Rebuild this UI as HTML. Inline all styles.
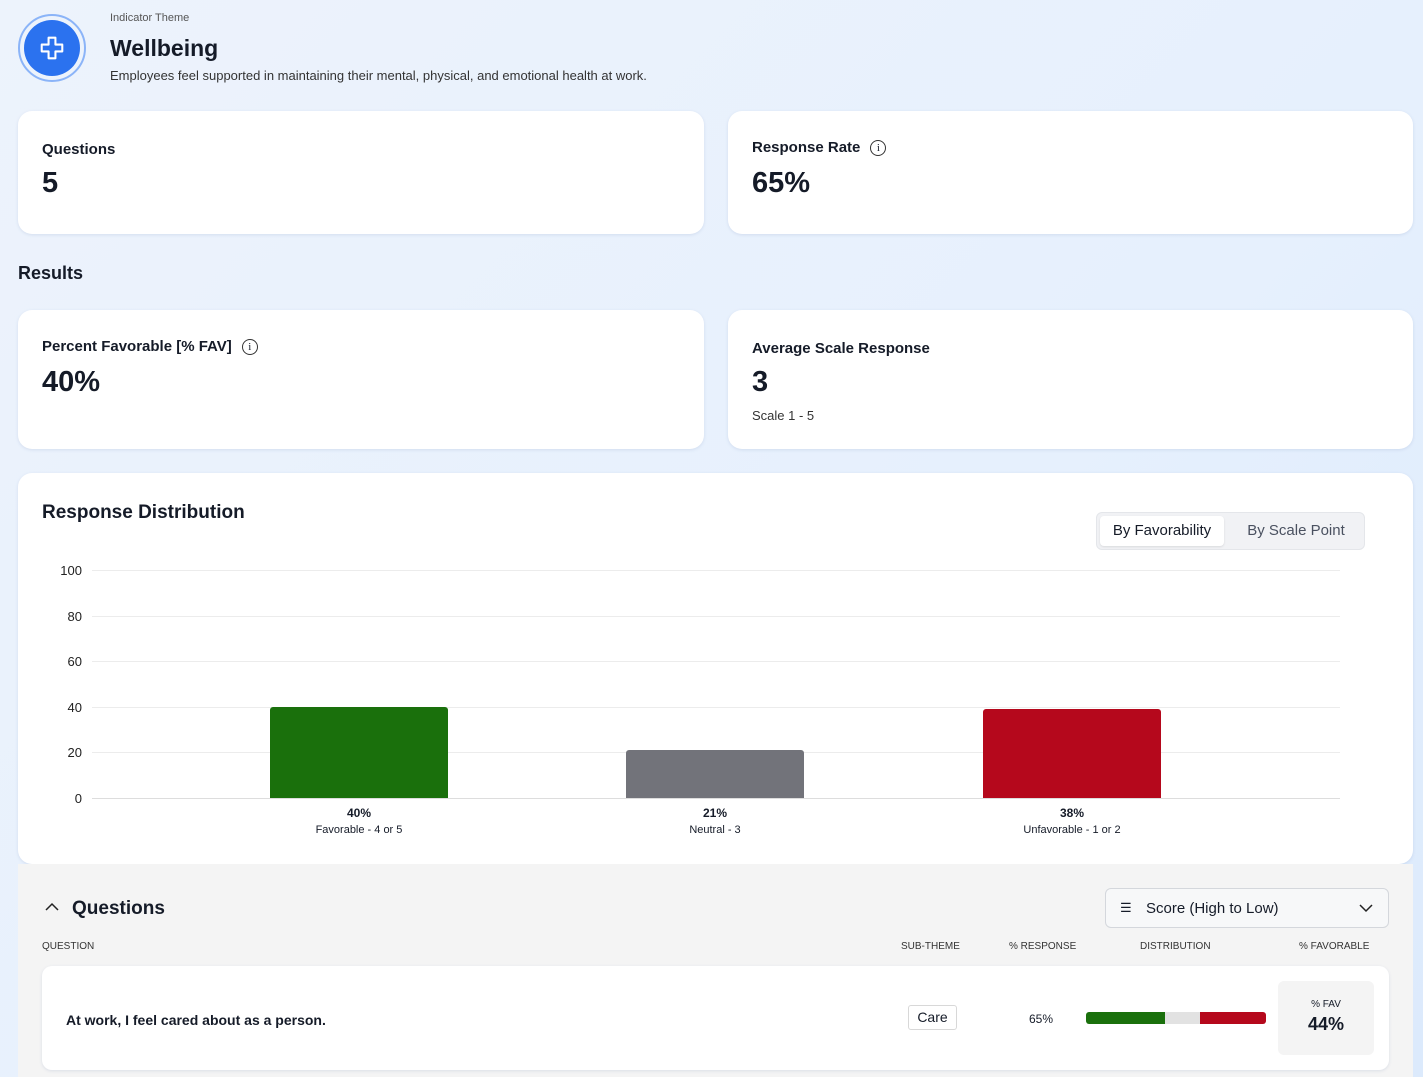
<!DOCTYPE html>
<html><head><style>
*{box-sizing:border-box;margin:0;padding:0}
body{width:1423px;height:1077px;overflow:hidden;font-family:"Liberation Sans",sans-serif;color:#151b28;background:linear-gradient(135deg,#edf3fc 0%,#e6f0fd 60%,#dceafc 100%);position:relative}
.a{position:absolute}
.card{position:absolute;background:#fff;border-radius:14px;box-shadow:0 1px 3px rgba(80,110,160,.15)}
.lbl{font-size:15px;font-weight:bold;position:absolute;left:24px}
.big{font-size:29px;font-weight:bold;position:absolute;left:24px}
.info{display:inline-block;width:16px;height:16px;border:1.3px solid #333;border-radius:50%;font-size:11px;text-align:center;line-height:14px;font-weight:normal;margin-left:10px;vertical-align:1px;font-family:"Liberation Serif",serif}
.yl{position:absolute;width:40px;text-align:right;left:42px;font-size:13px;color:#222}
.gl{position:absolute;left:92px;width:1248px;height:1px;background:#ececec}
.bl{position:absolute;text-align:center;width:200px;font-size:11px;line-height:16px}
.th{position:absolute;top:941px;font-size:10px;color:#333}
</style></head><body>
<div class="a" style="left:18px;top:14px;width:68px;height:68px;border-radius:50%;border:2px solid #8bb4f8;"></div>
<div class="a" style="left:24px;top:20px;width:56px;height:56px;border-radius:50%;background:#2b72ef;"></div>
<svg class="a" style="left:40px;top:36px" width="24" height="24" viewBox="0 0 28 28"><path d="M10 2h8v8h8v8h-8v8h-8v-8H2v-8h8z" fill="none" stroke="#fff" stroke-width="2.4" stroke-linejoin="round"/></svg>
<div class="a" style="left:110px;top:12px;font-size:11px;color:#555">Indicator Theme</div>
<div class="a" style="left:110px;top:35px;font-size:23px;font-weight:bold">Wellbeing</div>
<div class="a" style="left:110px;top:68px;font-size:13px;color:#333">Employees feel supported in maintaining their mental, physical, and emotional health at work.</div>

<div class="card" style="left:18px;top:111px;width:686px;height:123px"><div class="lbl" style="top:30px">Questions</div><div class="big" style="top:56px">5</div></div>
<div class="card" style="left:728px;top:111px;width:685px;height:123px"><div class="lbl" style="top:28px">Response Rate<span class="info">i</span></div><div class="big" style="top:56px">65%</div></div>
<div class="a" style="left:18px;top:263px;font-size:18px;font-weight:bold">Results</div>
<div class="card" style="left:18px;top:310px;width:686px;height:139px"><div class="lbl" style="top:28px">Percent Favorable [% FAV]<span class="info">i</span></div><div class="big" style="top:56px">40%</div></div>
<div class="card" style="left:728px;top:310px;width:685px;height:139px"><div class="lbl" style="top:30px">Average Scale Response</div><div class="big" style="top:56px">3</div><div class="a" style="left:24px;top:98px;font-size:13px;color:#333">Scale 1 - 5</div></div>

<div class="card" style="left:18px;top:473px;width:1395px;height:391px">
<div class="a" style="left:24px;top:29px;font-size:19px;font-weight:bold">Response Distribution</div>
<div class="a" style="left:1078px;top:39px;width:269px;height:38px;background:#f1f2f5;border-radius:6px;border:1px solid #e4e6ea"></div>
<div class="a" style="left:1082px;top:43px;width:124px;height:30px;background:#fff;border-radius:4px;box-shadow:0 1px 2px rgba(0,0,0,.1);font-size:15px;text-align:center;line-height:30px">By Favorability</div>
<div class="a" style="left:1218px;top:43px;width:120px;font-size:15px;line-height:30px;color:#4a5160;text-align:center">By Scale Point</div>
</div>
<div class="gl" style="top:570px"></div><div class="gl" style="top:616px"></div><div class="gl" style="top:661px"></div><div class="gl" style="top:707px"></div><div class="gl" style="top:752px"></div><div class="gl" style="top:798px;background:#ddd"></div>
<div class="yl" style="top:563px">100</div><div class="yl" style="top:609px">80</div><div class="yl" style="top:654px">60</div><div class="yl" style="top:700px">40</div><div class="yl" style="top:745px">20</div><div class="yl" style="top:791px">0</div>
<div class="a" style="left:270px;top:707px;width:178px;height:91px;background:#1a700c;border-radius:3px 3px 0 0"></div>
<div class="a" style="left:626px;top:750px;width:178px;height:48px;background:#72737a;border-radius:3px 3px 0 0"></div>
<div class="a" style="left:983px;top:709px;width:178px;height:89px;background:#b5081c;border-radius:3px 3px 0 0"></div>
<div class="bl" style="left:259px;top:805px"><b style="font-size:12px">40%</b><br>Favorable - 4 or 5</div>
<div class="bl" style="left:615px;top:805px"><b style="font-size:12px">21%</b><br>Neutral - 3</div>
<div class="bl" style="left:972px;top:805px"><b style="font-size:12px">38%</b><br>Unfavorable - 1 or 2</div>

<div class="a" style="left:18px;top:864px;width:1395px;height:213px;background:#f4f4f4"></div>
<svg class="a" style="left:44px;top:902px" width="16" height="10"><path d="M2 8l6-6 6 6" fill="none" stroke="#222" stroke-width="1.5"/></svg>
<div class="a" style="left:72px;top:898px;font-size:19px;font-weight:bold">Questions</div>
<div class="a" style="left:1105px;top:888px;width:284px;height:40px;background:#f7f8f9;border:1px solid #d4d7dc;border-radius:6px"></div>
<div class="a" style="left:1120px;top:900px;font-size:13px">☰</div>
<div class="a" style="left:1146px;top:900px;font-size:15px">Score (High to Low)</div>
<svg class="a" style="left:1358px;top:903px" width="16" height="10"><path d="M2 2l6 6 6-6" fill="none" stroke="#222" stroke-width="1.5"/></svg>
<div class="th" style="left:42px">QUESTION</div><div class="th" style="left:901px">SUB-THEME</div><div class="th" style="left:1009px">% RESPONSE</div><div class="th" style="left:1140px">DISTRIBUTION</div><div class="th" style="left:1299px">% FAVORABLE</div>
<div class="card" style="left:42px;top:966px;width:1347px;height:104px;border-radius:10px"></div>
<div class="a" style="left:66px;top:1012px;font-size:14px;font-weight:bold">At work, I feel cared about as a person.</div>
<div class="a" style="left:908px;top:1005px;width:49px;height:25px;border:1px solid #d8d8d8;border-radius:3px;font-size:14px;text-align:center;line-height:23px">Care</div>
<div class="a" style="left:1029px;top:1012px;font-size:12px">65%</div>
<div class="a" style="left:1086px;top:1012px;width:180px;height:12px;border-radius:3px;overflow:hidden;display:flex"><div style="width:79px;background:#1a700c"></div><div style="width:35px;background:#e2e2e2"></div><div style="flex:1;background:#b5081c"></div></div>
<div class="a" style="left:1278px;top:981px;width:96px;height:74px;background:#f4f4f4;border-radius:6px;text-align:center"><div style="font-size:10px;margin-top:18px">% FAV</div><div style="font-size:18px;font-weight:bold;margin-top:4px">44%</div></div>
</body></html>
